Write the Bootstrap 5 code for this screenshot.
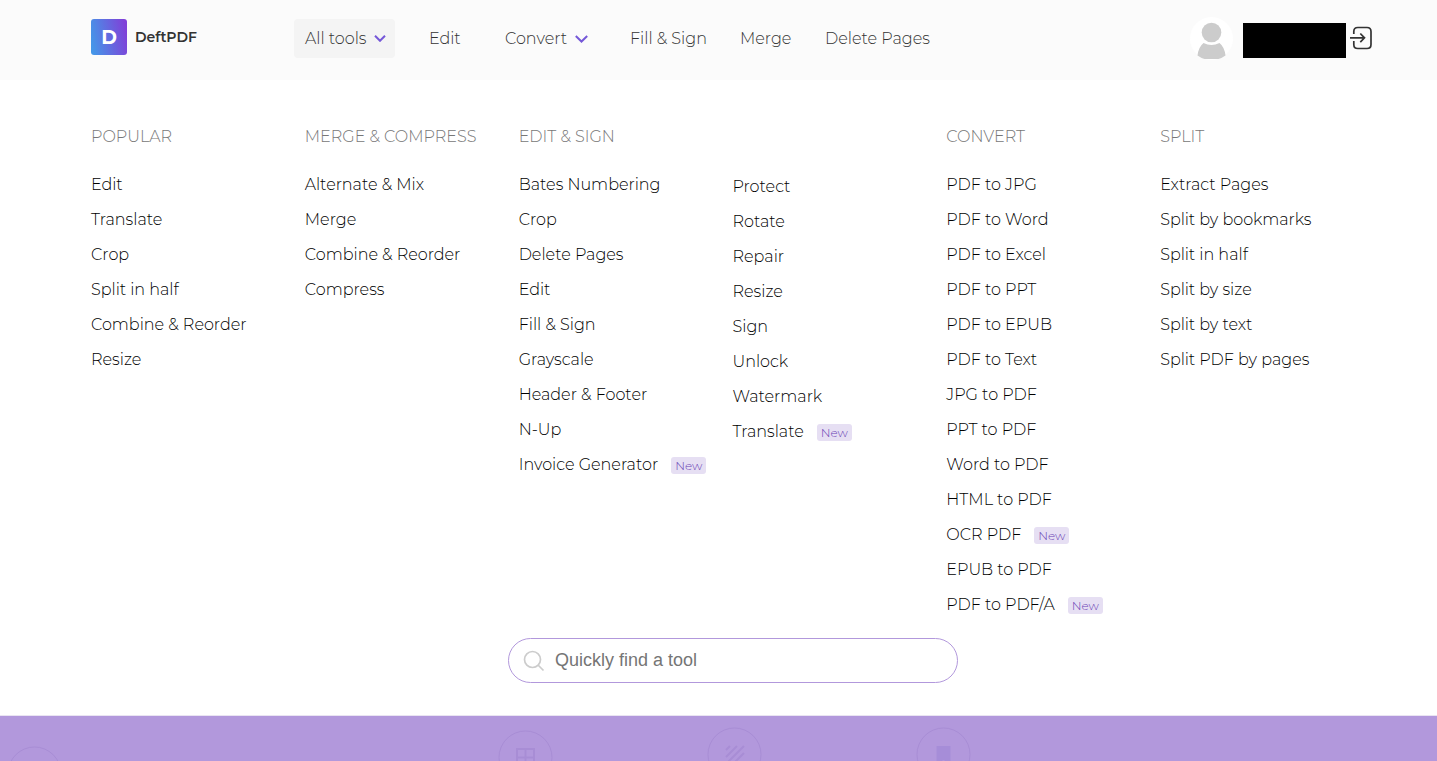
<!DOCTYPE html>
<html lang="en">
<head>
<meta charset="utf-8">
<meta name="viewport" content="width=device-width, initial-scale=1">
<title>DeftPDF</title>
<link href="https://cdn.jsdelivr.net/npm/bootstrap@5.3.0/dist/css/bootstrap.min.css" rel="stylesheet">
<style>
  body { font-family: Montserrat, Inter, sans-serif; font-size: 16px; font-weight: 300; color: #000; }
  a { color: inherit; text-decoration: none; }
  .page-gutter { padding-left: 77px; padding-right: 77px; }
  .top-bar { background: #fbfbfb; height: 80px; flex: none; }
  .brand-link { width: 217px; padding-left: 14px; margin-top: -6px; color: #333; font-size: 14px; font-weight: 600; gap: 8px; }
  .main-nav { display: grid; grid-template-columns: 124px 76px 125px 110px 85px auto; margin-top: -3px; color: #333; }
  .main-nav button, .main-nav a { justify-self: start; height: 39px; padding: 0 9px 0 11px; border: 0; border-radius: 4px; background: none; color: inherit; font-weight: 300; white-space: nowrap; gap: 8px; }
  .main-nav .current-item { background: #f4f4f4; }
  .user-area { margin-right: -12px; }
  .avatar-disc { width: 43px; height: 43px; background: #fff; margin-bottom: 4px; }
  .user-name { width: 103px; height: 35px; background: #000; margin: 0 4px 0 10px; }
  .logout-link { margin-bottom: 4px; }
  .tool-col { padding-left: 14px; white-space: nowrap; }
  .tool-menu { padding-top: 45px; padding-bottom: 32px; border-bottom: 1px solid #e9e4f2; flex: none; }
  .tool-menu h2 { font-size: 16px; font-weight: 300; line-height: 24px; height: 24px; margin: 0 0 18px; color: #777; }
  .heading-spacer { height: 44px; }
  .tool-menu ul { margin: 0; line-height: 35px; }
  .tool-menu li { height: 35px; }
  .new-tag { font-size: 12px; font-weight: 300; line-height: 17px; height: 17px; padding: 0 4px; border-radius: 3px; background: #e6dff3; color: #6a3fb5; margin-left: 13px; margin-top: 2px; }
  .search-row { padding-left: 29px; }
  .search-box { width: 450px; height: 45px; border: 1px solid #b298dc; border-radius: 23px; padding-left: 14px; margin: 16px auto 0; gap: 10px; }
  .search-box input { font-family: "Liberation Sans", sans-serif; font-size: 18px; font-weight: 400; border: 0; outline: 0; padding: 0; }
  .search-box input::placeholder { color: #757575; opacity: 1; }
  .backdrop-area { background: #b298dc; min-height: 0; }
  .tool-discs { display: grid; grid-template-columns: 491px 209px 209px 1fr; padding-left: 7px; padding-top: 11px; }
  .disc-low { margin-top: 19px; }
  .disc-mid { margin-top: 3px; }
</style>
</head>
<body class="d-flex flex-column vh-100 overflow-hidden bg-white">
<header class="top-bar page-gutter d-flex align-items-center">
  <a href="#" class="brand-link d-flex align-items-center flex-shrink-0">
    <svg width="36" height="36" viewBox="0 0 36 36" aria-hidden="true">
      <defs><linearGradient id="lg" x1="0" y1=".6" x2="1" y2=".4"><stop offset="0" stop-color="#4596e8"/><stop offset="1" stop-color="#8040d8"/></linearGradient></defs>
      <rect width="36" height="36" rx="3" fill="url(#lg)"/>
      <text x="18" y="25" text-anchor="middle" font-size="19" font-weight="700" fill="#fff">D</text>
    </svg>
    <span>DeftPDF</span>
  </a>
  <nav class="main-nav" aria-label="Main">
    <button type="button" class="current-item d-flex align-items-center" aria-expanded="true">All tools
      <svg width="12" height="7" viewBox="0 0 12 7" fill="none" stroke="#7558d8" stroke-width="2" aria-hidden="true"><path d="M1 .8l5 5 5-5"/></svg></button>
    <a href="#" class="d-flex align-items-center">Edit</a>
    <button type="button" class="d-flex align-items-center">Convert
      <svg width="13" height="8" viewBox="0 0 13 8" fill="none" stroke="#7558d8" stroke-width="2" aria-hidden="true"><path d="M.8 1l5.7 5.5L12.2 1"/></svg></button>
    <a href="#" class="d-flex align-items-center">Fill &amp; Sign</a>
    <a href="#" class="d-flex align-items-center">Merge</a>
    <a href="#" class="d-flex align-items-center">Delete Pages</a>
  </nav>
  <div class="d-flex align-items-center ms-auto user-area">
    <span class="avatar-disc rounded-circle">
      <svg class="d-block" width="43" height="43" viewBox="0 0 43 43" fill="#ccc" aria-hidden="true"><circle cx="21.5" cy="15.5" r="9.800"/><path d="M7.500 38.500Q8.500 30 13.500 26q8 4 16 0Q34.500 30 35.500 38.500 32 41 28.500 42h-14Q11 41 7.500 38.500z"/></svg>
    </span>
    <span class="user-name"></span>
    <a href="#" class="logout-link" aria-label="Log out"><svg class="d-block" width="22" height="24" viewBox="0 0 22 24" fill="none" stroke="#333" stroke-width="1.700" aria-hidden="true"><path d="M3.800 8V5.500q0-4 4-4H17q4 0 4 4v13q0 4-4 4H7.800q-4 0-4-4V15M0 11.800h14.500M10.300 7.500l4.200 4.300-4.200 4.300"/></svg></a>
  </div>
</header>

<main class="tool-menu page-gutter">
  <div class="row g-0">
    <section class="col tool-col"><h2>POPULAR</h2>
      <ul class="list-unstyled"><li><a href="#">Edit</a></li><li><a href="#">Translate</a></li><li><a href="#">Crop</a></li><li><a href="#">Split in half</a></li><li><a href="#">Combine &amp; Reorder</a></li><li><a href="#">Resize</a></li></ul></section>
    <section class="col tool-col"><h2>MERGE &amp; COMPRESS</h2>
      <ul class="list-unstyled"><li><a href="#">Alternate &amp; Mix</a></li><li><a href="#">Merge</a></li><li><a href="#">Combine &amp; Reorder</a></li><li><a href="#">Compress</a></li></ul></section>
    <section class="col tool-col"><h2>EDIT &amp; SIGN</h2>
      <ul class="list-unstyled"><li><a href="#">Bates Numbering</a></li><li><a href="#">Crop</a></li><li><a href="#">Delete Pages</a></li><li><a href="#">Edit</a></li><li><a href="#">Fill &amp; Sign</a></li><li><a href="#">Grayscale</a></li><li><a href="#">Header &amp; Footer</a></li><li><a href="#">N-Up</a></li><li class="d-flex align-items-center"><a href="#">Invoice Generator</a><span class="new-tag">New</span></li></ul></section>
    <section class="col tool-col"><div class="heading-spacer"></div>
      <ul class="list-unstyled"><li><a href="#">Protect</a></li><li><a href="#">Rotate</a></li><li><a href="#">Repair</a></li><li><a href="#">Resize</a></li><li><a href="#">Sign</a></li><li><a href="#">Unlock</a></li><li><a href="#">Watermark</a></li><li class="d-flex align-items-center"><a href="#">Translate</a><span class="new-tag">New</span></li></ul></section>
    <section class="col tool-col"><h2>CONVERT</h2>
      <ul class="list-unstyled"><li><a href="#">PDF to JPG</a></li><li><a href="#">PDF to Word</a></li><li><a href="#">PDF to Excel</a></li><li><a href="#">PDF to PPT</a></li><li><a href="#">PDF to EPUB</a></li><li><a href="#">PDF to Text</a></li><li><a href="#">JPG to PDF</a></li><li><a href="#">PPT to PDF</a></li><li><a href="#">Word to PDF</a></li><li><a href="#">HTML to PDF</a></li><li class="d-flex align-items-center"><a href="#">OCR PDF</a><span class="new-tag">New</span></li><li><a href="#">EPUB to PDF</a></li><li class="d-flex align-items-center"><a href="#">PDF to PDF/A</a><span class="new-tag">New</span></li></ul></section>
    <section class="col tool-col"><h2>SPLIT</h2>
      <ul class="list-unstyled"><li><a href="#">Extract Pages</a></li><li><a href="#">Split by bookmarks</a></li><li><a href="#">Split in half</a></li><li><a href="#">Split by size</a></li><li><a href="#">Split by text</a></li><li><a href="#">Split PDF by pages</a></li></ul></section>
  </div>
  <div class="search-row">
    <label class="search-box d-flex align-items-center">
      <svg width="22" height="22" viewBox="0 0 22 22" fill="none" stroke="#ccc" stroke-width="1.700" aria-hidden="true"><circle cx="9.500" cy="9.500" r="8"/><path d="M15 15l5.500 5.500"/></svg>
      <input type="search" class="flex-grow-1 bg-transparent" placeholder="Quickly find a tool" aria-label="Quickly find a tool">
    </label>
  </div>
</main>

<div class="backdrop-area flex-grow-1 overflow-hidden">
  <div class="tool-discs" aria-hidden="true">
    <svg class="disc-low" width="55" height="55" viewBox="0 0 55 55" fill="none" stroke="#a88dd5"><circle cx="27.500" cy="27.500" r="26.500"/></svg>
    <svg class="disc-mid" width="55" height="55" viewBox="0 0 55 55" fill="none" stroke="#a88dd5"><circle cx="27.500" cy="27.500" r="26.500"/><path stroke-width="2" d="M19 19h17v17H19zM27.500 19v17M19 27.500h17"/></svg>
    <svg width="55" height="55" viewBox="0 0 55 55" fill="none" stroke="#a88dd5"><circle cx="27.500" cy="27.500" r="26.500"/><path stroke-width="2" d="M19 23l4-4M19 30l11-11M19 37l18-18M26 37l11-11"/></svg>
    <svg width="55" height="55" viewBox="0 0 55 55" fill="none" stroke="#a88dd5"><circle cx="27.500" cy="27.500" r="26.500"/><path fill="#a68dd8" stroke="none" d="M20.500 19h14v18l-7-4-7 4z"/></svg>
  </div>
</div>
<script src="https://cdn.jsdelivr.net/npm/bootstrap@5.3.0/dist/js/bootstrap.bundle.min.js"></script>
</body>
</html>
